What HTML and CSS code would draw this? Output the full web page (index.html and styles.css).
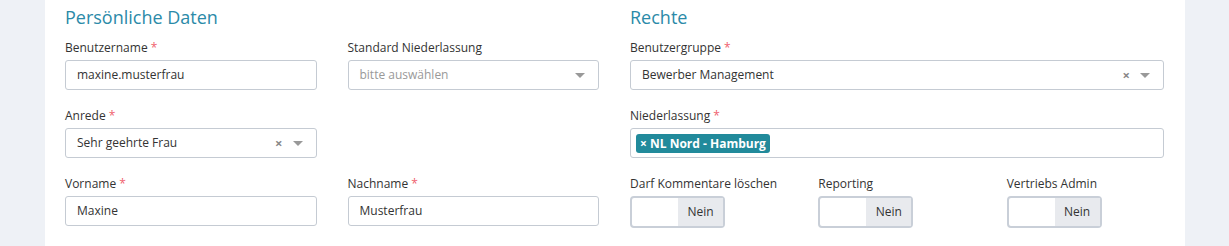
FILE: index.html
```html
<!DOCTYPE html>
<html>
<head>
    <meta charset="UTF-8">
    <title>Benutzer bearbeiten</title>
    <link rel="stylesheet" href="styles.css">
</head>
<body>
    <div class="card">
        <div class="section">
            <h2>Persönliche Daten</h2>
            <div class="grid two">
                <div class="field">
                    <label>Benutzername <span class="req">*</span></label>
                    <div class="input">maxine.musterfrau</div>
                </div>
                <div class="field">
                    <label>Standard Niederlassung</label>
                    <div class="input select placeholder">
                        <span>bitte auswählen</span>
                        <span class="arrow"></span>
                    </div>
                </div>
                <div class="field">
                    <label>Anrede <span class="req">*</span></label>
                    <div class="input select">
                        <span>Sehr geehrte Frau</span>
                        <span class="clear">×</span>
                        <span class="arrow"></span>
                    </div>
                </div>
                <div class="field"></div>
                <div class="field">
                    <label>Vorname <span class="req">*</span></label>
                    <div class="input">Maxine</div>
                </div>
                <div class="field">
                    <label>Nachname <span class="req">*</span></label>
                    <div class="input">Musterfrau</div>
                </div>
            </div>
        </div>
        <div class="section">
            <h2>Rechte</h2>
            <div class="field">
                <label>Benutzergruppe <span class="req">*</span></label>
                <div class="input select">
                    <span>Bewerber Management</span>
                    <span class="clear">×</span>
                    <span class="arrow"></span>
                </div>
            </div>
            <div class="field">
                <label>Niederlassung <span class="req">*</span></label>
                <div class="input multi">
                    <span class="tag"><span class="tag-x">×</span> NL Nord - Hamburg</span>
                </div>
            </div>
            <div class="grid three">
                <div class="field">
                    <label>Darf Kommentare löschen</label>
                    <div class="toggle"><span class="on"></span><span class="off">Nein</span></div>
                </div>
                <div class="field">
                    <label>Reporting</label>
                    <div class="toggle"><span class="on"></span><span class="off">Nein</span></div>
                </div>
                <div class="field">
                    <label>Vertriebs Admin</label>
                    <div class="toggle"><span class="on"></span><span class="off">Nein</span></div>
                </div>
            </div>
        </div>
    </div>
</body>
</html>
```

FILE: styles.css
```css
body {
    margin: 0;
    background: #eef1f6;
    font-family: "Open Sans", Arial, sans-serif;
    font-size: 12px;
    color: #333;
}
.card {
    margin: 0 44px 0 45px;
    background: #fff;
    padding: 4px 21px 0 20px;
    height: 242px;
    display: grid;
    grid-template-columns: 1fr 1fr;
    column-gap: 31px;
}
h2 {
    margin: 0 0 9px;
    font-size: 18px;
    font-weight: 400;
    color: #2b8aa8;
    line-height: 26px;
}
.grid {
    display: grid;
    column-gap: 31px;
}
.two {
    grid-template-columns: 1fr 1fr;
}
.three {
    grid-template-columns: 1fr 1fr 1fr;
}
.field {
    margin-bottom: 17px;
    min-height: 51px;
}
label {
    display: block;
    line-height: 18px;
    margin-bottom: 3px;
    white-space: nowrap;
}
.req {
    color: #ef5f6e;
}
.input {
    height: 28px;
    border: 1px solid #c5cbd3;
    border-radius: 3px;
    padding: 0 11px;
    line-height: 28px;
    display: flex;
    align-items: center;
}
.select span:first-child {
    flex: 1;
}
.placeholder {
    color: #999;
}
.clear {
    color: #888;
    font-size: 13px;
    font-weight: bold;
    margin-right: 10px;
}
.arrow {
    width: 0;
    height: 0;
    border-left: 5px solid transparent;
    border-right: 5px solid transparent;
    border-top: 5px solid #999;
    margin-right: 2px;
}
.multi {
    padding: 0 5px;
}
.tag {
    background: #218a9b;
    color: #fff;
    font-weight: 700;
    border-radius: 3px;
    padding: 0 4px;
    line-height: 19px;
}
.tag-x {
    font-size: 12px;
}
.toggle {
    width: 91px;
    height: 28px;
    border: 2px solid #c9cfd8;
    border-radius: 4px;
    display: flex;
}
.toggle .on {
    width: 46px;
}
.toggle .off {
    flex: 1;
    background: #e8eaee;
    line-height: 28px;
    text-align: center;
}
```
